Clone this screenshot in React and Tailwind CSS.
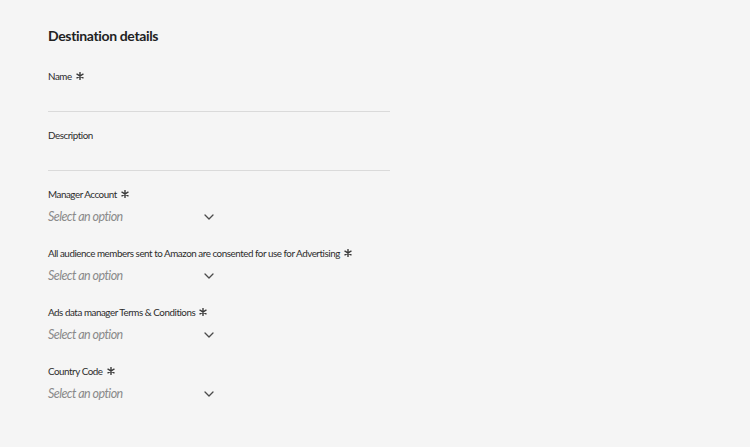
import React from "react";

const Star = () => (
  <svg width="8" height="8" viewBox="0 0 8 8" className="ml-[4px] inline-block text-[#3a3a3a]">
    <path d="M4 0.5 L4 7.5 M1 2.2 L7 5.8 M7 2.2 L1 5.8" stroke="currentColor" strokeWidth="1.4" strokeLinecap="round" />
  </svg>
);

const Chevron = () => (
  <svg width="10" height="6" viewBox="0 0 10 6" className="text-[#4b4b4b]">
    <path d="M1 1 L5 5 L9 1" fill="none" stroke="currentColor" strokeWidth="1.3" strokeLinecap="round" strokeLinejoin="round" />
  </svg>
);

const Label = ({ text, required }) => (
  <div className="flex items-center h-[14px] text-[9.8px] text-[#2c2c2c] tracking-[-0.45px]">
    {text}
    {required && <Star />}
  </div>
);

const TextField = ({ label, required }) => (
  <div className="flex flex-col h-[59px]">
    <Label text={label} required={required} />
    <div className="h-[29px] w-[342px] border-b border-[#dadada]" />
  </div>
);

const SelectField = ({ label }) => (
  <div className="flex flex-col h-[59px]">
    <Label text={label} required />
    <div className="mt-[8px] flex h-[16px] w-[166px] items-center justify-between">
      <span className="italic text-[12.5px] text-[#8a8a8a] tracking-[-0.55px]">Select an option</span>
      <Chevron />
    </div>
  </div>
);

export default function App() {
  const selects = [
    "Manager Account",
    "All audience members sent to Amazon are consented for use for Advertising",
    "Ads data manager Terms & Conditions",
    "Country Code",
  ];

  return (
    <div className="w-[750px] h-[447px] bg-[#f5f5f5] pl-[48px] pt-[27px]" style={{ fontFamily: "Lato, 'Open Sans', sans-serif" }}>
      <h2 className="text-[14px] font-bold text-[#222] h-[18px] leading-[18px] tracking-[-0.35px]">
        Destination details
      </h2>
      <div className="mt-[24px] flex flex-col">
        <TextField label="Name" required />
        <TextField label="Description" />
        {selects.map((s) => (
          <SelectField key={s} label={s} />
        ))}
      </div>
    </div>
  );
}
